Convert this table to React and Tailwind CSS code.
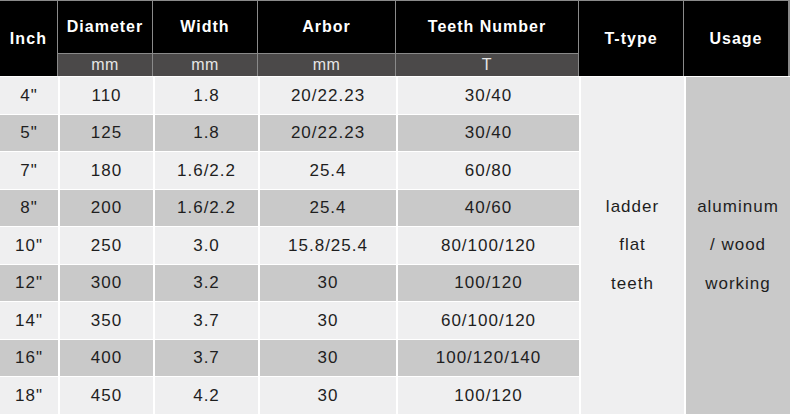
import React from "react";

const rows = [
  ['4"', "110", "1.8", "20/22.23", "30/40"],
  ['5"', "125", "1.8", "20/22.23", "30/40"],
  ['7"', "180", "1.6/2.2", "25.4", "60/80"],
  ['8"', "200", "1.6/2.2", "25.4", "40/60"],
  ['10"', "250", "3.0", "15.8/25.4", "80/100/120"],
  ['12"', "300", "3.2", "30", "100/120"],
  ['14"', "350", "3.7", "30", "60/100/120"],
  ['16"', "400", "3.7", "30", "100/120/140"],
  ['18"', "450", "4.2", "30", "100/120"],
];

const cols = "grid-cols-[58px_95px_105px_138px_183px_105px_106px]";

const heads = [
  { t: "Diameter", u: "mm", c: "col-start-2" },
  { t: "Width", u: "mm", c: "col-start-3" },
  { t: "Arbor", u: "mm", c: "col-start-4" },
  { t: "Teeth Number", u: "T", c: "col-start-5" },
];

const App = () => {
  return (
    <div
      className="w-[790px] h-[414px] flex flex-col bg-white overflow-hidden"
      style={{ fontFamily: '"Liberation Sans", Arial, sans-serif' }}
    >
      {/* Header */}
      <div
        className={`grid ${cols} grid-rows-[53px_22px] border-t border-[#8a8a8a] bg-black text-white`}
      >
        <div className="col-start-1 row-start-1 row-span-2 flex items-center justify-center border-r border-[#8a8a8a] font-bold text-[16px] tracking-[1.2px]">
          Inch
        </div>
        {heads.map((h) => (
          <div
            key={h.t}
            className={`${h.c} row-start-1 flex items-center justify-center border-r border-b border-[#8a8a8a] font-bold text-[16px] tracking-[1px]`}
          >
            {h.t}
          </div>
        ))}
        {heads.map((h) => (
          <div
            key={h.t + "u"}
            className={`${h.c} row-start-2 flex items-center justify-center bg-[#4b4949] border-r border-[#8a8a8a] text-[16px] text-[#e6e6e6] tracking-[0.5px]`}
          >
            {h.u}
          </div>
        ))}
        <div className="col-start-6 row-start-1 row-span-2 flex items-center justify-center border-r border-[#8a8a8a] font-bold text-[16px] tracking-[1px]">
          T-type
        </div>
        <div className="col-start-7 row-start-1 row-span-2 flex items-center justify-center border-r-2 border-[#8a8a8a] font-bold text-[16px] tracking-[1px]">
          Usage
        </div>
      </div>

      {/* Body */}
      <div
        className={`grid ${cols} grid-rows-[repeat(9,1fr)] flex-1 text-[#1e1e1e] text-[17px] tracking-[1px]`}
      >
        <div className="col-start-6 row-start-1 row-span-9 flex flex-col items-center justify-center bg-[#efeff0] border-t border-l-2 border-white leading-[38.5px]">
          <span>ladder</span>
          <span>flat</span>
          <span>teeth</span>
        </div>
        <div className="col-start-7 row-start-1 row-span-9 flex flex-col items-center justify-center bg-[#c9c9c9] border-t border-l-2 border-white leading-[38.5px]">
          <span>aluminum</span>
          <span>/ wood</span>
          <span>working</span>
        </div>
        {rows.map((r, ri) =>
          r.map((v, ci) => (
            <div
              key={`${ri}-${ci}`}
              className={`flex items-center justify-center border-t border-white ${
                ci > 0 ? "border-l-2" : ""
              } ${ri % 2 === 0 ? "bg-[#efeff0]" : "bg-[#c9c9c9]"}`}
            >
              {v}
            </div>
          ))
        )}
      </div>
    </div>
  );
};

export default App;
